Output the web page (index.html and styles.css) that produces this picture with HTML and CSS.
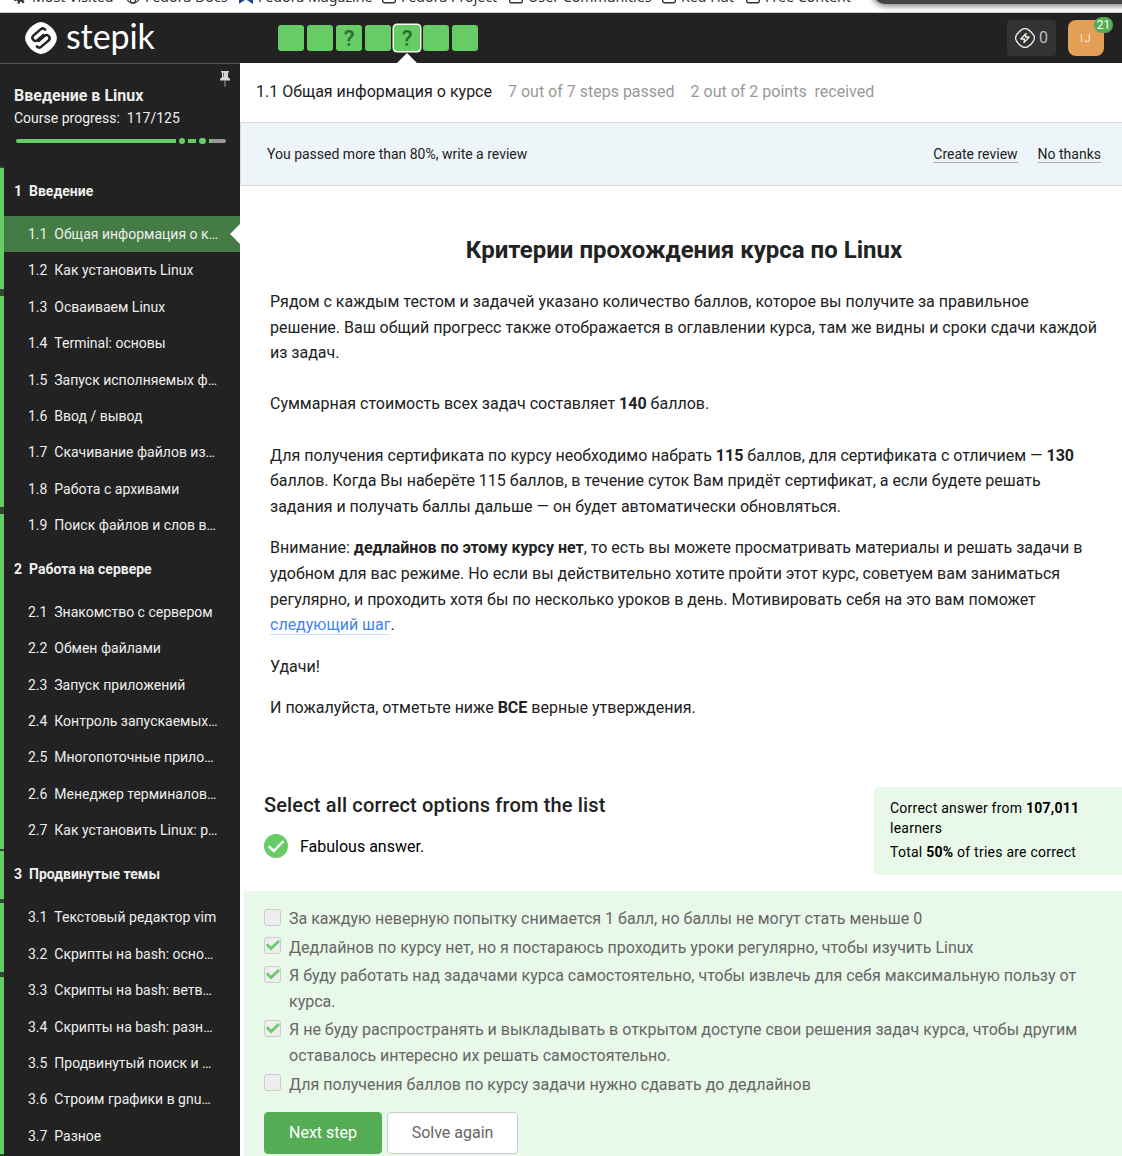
FILE: index.html
```html
<!DOCTYPE html>
<html lang="ru">
<head>
<meta charset="utf-8">
<title>Введение в Linux</title>
<link rel="stylesheet" href="styles.css">
</head>
<body>
<div class="bookmarks">
  <span class="bm"><svg width="14" height="14" viewBox="0 0 14 14"><circle cx="7" cy="7" r="3.4" fill="none" stroke="#333" stroke-width="3.2"/><circle cx="7" cy="7" r="5.6" fill="none" stroke="#333" stroke-width="2.4" stroke-dasharray="2.2 2.2"/></svg><span>Most Visited</span></span>
  <span class="bm"><svg width="14" height="14" viewBox="0 0 14 14" fill="none" stroke="#333" stroke-width="1.2"><circle cx="7" cy="7" r="6.2"/><ellipse cx="7" cy="7" rx="3" ry="6.2"/><path d="M1 7h12"/></svg><span>Fedora Docs</span></span>
  <span class="bm"><svg width="14" height="14" viewBox="0 0 14 14"><path d="M0 0h14v14L7 9.500 0 14z" fill="#3065b4"/><path d="M0 12L4 9M14 13L9 8" stroke="#17345f" stroke-width="1.500"/></svg><span>Fedora Magazine</span></span>
  <span class="bm"><svg width="14" height="14" viewBox="0 0 14 14" fill="none" stroke="#333" stroke-width="1.400"><path d="M.7 2.500h5l1.500 2h6.100v6.800a1.500 1.500 0 0 1-1.500 1.500H2.200a1.500 1.500 0 0 1-1.500-1.500z"/></svg><span>Fedora Project</span></span>
  <span class="bm"><svg width="14" height="14" viewBox="0 0 14 14" fill="none" stroke="#333" stroke-width="1.400"><path d="M.7 2.500h5l1.500 2h6.100v6.800a1.500 1.500 0 0 1-1.500 1.500H2.200a1.500 1.500 0 0 1-1.500-1.500z"/></svg><span>User Communities</span></span>
  <span class="bm"><svg width="14" height="14" viewBox="0 0 14 14" fill="none" stroke="#333" stroke-width="1.400"><path d="M.7 2.500h5l1.500 2h6.100v6.800a1.500 1.500 0 0 1-1.500 1.500H2.200a1.500 1.500 0 0 1-1.500-1.500z"/></svg><span>Red Hat</span></span>
  <span class="bm"><svg width="14" height="14" viewBox="0 0 14 14" fill="none" stroke="#333" stroke-width="1.400"><path d="M.7 2.500h5l1.500 2h6.100v6.800a1.500 1.500 0 0 1-1.500 1.500H2.200a1.500 1.500 0 0 1-1.500-1.500z"/></svg><span>Free Content</span></span>
  <div class="popup-edge"></div>
</div>
<header class="topbar">
  <a class="logo">
    <svg width="34" height="34" viewBox="0 0 34 34"><path d="M11.500 2.700a11 11 0 0 1 11 0 22 22 0 0 1 8.800 8.800 11 11 0 0 1 0 11 22 22 0 0 1-8.800 8.800 11 11 0 0 1-11 0 22 22 0 0 1-8.800-8.800 11 11 0 0 1 0-11 22 22 0 0 1 8.800-8.800z" fill="#fff"/><path d="M21.200 8.600c-1.300-1.300-3.200-1.400-4.600-.2l-7.300 6.200a3.100 3.100 0 0 0 4 4.700l6.200-5.300M12.800 25.400c1.300 1.300 3.200 1.400 4.600.2l7.300-6.200a3.100 3.100 0 0 0-4-4.700l-6.200 5.300" fill="none" stroke="#222" stroke-width="2.500" stroke-linecap="round"/></svg>
    <span class="wordmark">stepik</span>
  </a>
  <nav class="steps">
    <i class="step"></i><i class="step"></i><i class="step">?</i><i class="step"></i><i class="step current">?</i><i class="step"></i><i class="step"></i>
  </nav>
  <div class="energy">
    <svg width="20" height="20" viewBox="0 0 20 20" fill="none" stroke="#eee" stroke-width="1.300" stroke-linejoin="round"><path d="M6.800 1.600a6 6 0 0 1 6.400 0 15 15 0 0 1 5.200 5.200 6 6 0 0 1 0 6.400 15 15 0 0 1-5.200 5.200 6 6 0 0 1-6.400 0 15 15 0 0 1-5.200-5.200 6 6 0 0 1 0-6.400 15 15 0 0 1 5.200-5.200z"/><path d="M11 5.500L5.800 11h3.700L9 14.500 14.200 9h-3.700z"/></svg>
    <span>0</span>
  </div>
  <div class="avatar"><span class="initials">IJ</span><span class="badge">21</span></div>
</header>
<div class="layout">
  <aside class="sidebar">
    <svg class="pin" width="10" height="16" viewBox="0 0 10 16"><path d="M1 0h8v1.500H8V6l2 2v1.500H0V8l2-2V1.500H1z" fill="#d5d5d5"/><path d="M5 9v6.500" stroke="#aaa" stroke-width="1"/><path d="M3.500 1.500v4.500" stroke="#777"/></svg>
    <h2 class="course">Введение в Linux</h2>
    <p class="progress-text">Course progress: &nbsp;117/125</p>
    <div class="progress">
      <b class="bar long"></b><b class="dot"></b><b class="bar mid"></b><b class="dot"></b><b class="bar rest"></b>
    </div>
    <div class="toc">
      <div class="rail"><i style="height:121px"></i><i style="height:211px"></i><i style="height:335px"></i><i style="height:48px"></i><i style="height:69px"></i><i style="height:177px"></i></div>
      <div class="chapters">
        <h3><span>1</span>Введение</h3>
        <a class="active"><span>1.1</span>Общая информация о к…</a>
        <a><span>1.2</span>Как установить Linux</a>
        <a><span>1.3</span>Осваиваем Linux</a>
        <a><span>1.4</span>Terminal: основы</a>
        <a><span>1.5</span>Запуск исполняемых ф…</a>
        <a><span>1.6</span>Ввод / вывод</a>
        <a><span>1.7</span>Скачивание файлов из…</a>
        <a><span>1.8</span>Работа с архивами</a>
        <a><span>1.9</span>Поиск файлов и слов в…</a>
        <h3><span>2</span>Работа на сервере</h3>
        <a><span>2.1</span>Знакомство с сервером</a>
        <a><span>2.2</span>Обмен файлами</a>
        <a><span>2.3</span>Запуск приложений</a>
        <a><span>2.4</span>Контроль запускаемых…</a>
        <a><span>2.5</span>Многопоточные прило…</a>
        <a><span>2.6</span>Менеджер терминалов…</a>
        <a><span>2.7</span>Как установить Linux: р…</a>
        <h3 class="last"><span>3</span>Продвинутые темы</h3>
        <a><span>3.1</span>Текстовый редактор vim</a>
        <a><span>3.2</span>Скрипты на bash: осно…</a>
        <a><span>3.3</span>Скрипты на bash: ветв…</a>
        <a><span>3.4</span>Скрипты на bash: разн…</a>
        <a><span>3.5</span>Продвинутый поиск и …</a>
        <a><span>3.6</span>Строим графики в gnu…</a>
        <a><span>3.7</span>Разное</a>
      </div>
    </div>
  </aside>
  <main class="content">
    <div class="lesson-head"><span class="lesson-title">1.1 Общая информация о курсе</span><span>7 out of 7 steps passed</span><span>2 out of 2 points &nbsp;received</span></div>
    <div class="review"><span>You passed more than 80%, write a review</span><span class="links"><a>Create review</a><a>No thanks</a></span></div>
    <article class="text">
      <h1>Критерии прохождения курса по Linux</h1>
      <p>Рядом с каждым тестом и задачей указано количество баллов, которое вы получите за правильное<br>решение. Ваш общий прогресс также отображается в оглавлении курса, там же видны и сроки сдачи каждой<br>из задач.<br><br>Суммарная стоимость всех задач составляет <b>140</b> баллов.<br><br>Для получения сертификата по курсу необходимо набрать <b>115</b> баллов, для сертификата с отличием — <b>130</b><br>баллов. Когда Вы наберёте 115 баллов, в течение суток Вам придёт сертификат, а если будете решать<br>задания и получать баллы дальше — он будет автоматически обновляться.</p>
      <p>Внимание: <b>дедлайнов по этому курсу нет</b>, то есть вы можете просматривать материалы и решать задачи в<br>удобном для вас режиме. Но если вы действительно хотите пройти этот курс, советуем вам заниматься<br>регулярно, и проходить хотя бы по несколько уроков в день. Мотивировать себя на это вам поможет<br><a>следующий шаг</a>.</p>
      <p>Удачи!</p>
      <p>И пожалуйста, отметьте ниже <b>ВСЕ</b> верные утверждения.</p>
    </article>
    <section class="quiz-head">
      <div>
        <h2>Select all correct options from the list</h2>
        <div class="verdict"><svg width="24" height="24" viewBox="0 0 24 24"><circle cx="12" cy="12" r="12" fill="#6c6"/><path d="M4.600 12.200l5.200 4.800L19.500 7" fill="none" stroke="#fff" stroke-width="2.400"/></svg><span>Fabulous answer.</span></div>
      </div>
      <div class="stats"><p>Correct answer from <b>107,011</b><br>learners</p><p>Total <b>50%</b> of tries are correct</p></div>
    </section>
    <section class="quiz">
      <div class="option"><i class="box"></i><span>За каждую неверную попытку снимается 1 балл, но баллы не могут стать меньше 0</span></div>
      <div class="option"><i class="box"><svg width="15" height="15" viewBox="0 0 15 15"><path d="M1.800 6.200l4.300 4.300L14 3" fill="none" stroke="#6c6" stroke-width="2.700"/></svg></i><span>Дедлайнов по курсу нет, но я постараюсь проходить уроки регулярно, чтобы изучить Linux</span></div>
      <div class="option"><i class="box"><svg width="15" height="15" viewBox="0 0 15 15"><path d="M1.800 6.200l4.300 4.300L14 3" fill="none" stroke="#6c6" stroke-width="2.700"/></svg></i><span>Я буду работать над задачами курса самостоятельно, чтобы извлечь для себя максимальную пользу от<br>курса.</span></div>
      <div class="option"><i class="box"><svg width="15" height="15" viewBox="0 0 15 15"><path d="M1.800 6.200l4.300 4.300L14 3" fill="none" stroke="#6c6" stroke-width="2.700"/></svg></i><span>Я не буду распространять и выкладывать в открытом доступе свои решения задач курса, чтобы другим<br>оставалось интересно их решать самостоятельно.</span></div>
      <div class="option"><i class="box"></i><span>Для получения баллов по курсу задачи нужно сдавать до дедлайнов</span></div>
      <div class="buttons"><button class="primary">Next step</button><button>Solve again</button></div>
    </section>
  </main>
</div>
</body>
</html>
```
FILE: styles.css
```css
* { box-sizing: border-box; }
body {
  margin: 0;
  width: 1122px;
  height: 1156px;
  overflow: hidden;
  background: #fff;
  color: #222;
  font: 16px/25.6px Roboto, "Noto Sans", sans-serif;
  white-space: nowrap;
}
h1, h2, h3, p { margin: 0; }
i { font-style: normal; }

/* bookmarks toolbar */
.bookmarks {
  position: relative;
  height: 13px;
  overflow: hidden;
  display: grid;
  grid-template-columns: 113px 113px 143px 127px 153px 84px 110px;
  padding-left: 13px;
  border-bottom: 1px solid #ccc;
  background: #fff;
}
.bm {
  display: flex;
  gap: 5px;
  margin-top: -13px;
  height: 20px;
  font: 14.2px/20px "Noto Sans", sans-serif;
  color: #333;
}
.bm svg { flex: none; margin-top: 3px; }
.popup-edge {
  position: absolute;
  left: 872px;
  top: -20px;
  width: 280px;
  height: 24px;
  border-radius: 0 0 0 14px;
  background: #444;
  box-shadow: 0 2px 5px 1px rgba(0, 0, 0, .4);
}

/* top bar */
.topbar {
  display: flex;
  height: 50px;
  background: #222;
  color: #fff;
}
.logo { display: flex; width: 278px; padding: 8px 0 0 24px; }
.wordmark {
  margin-left: 8px;
  font: 34px/30px Lato, sans-serif;
  letter-spacing: -.1px;
}
.steps { display: flex; gap: 3px; padding-top: 12px; flex: 1; }
.step {
  width: 26px;
  height: 26px;
  border-radius: 3px;
  background: #6c6;
  color: #2d6a2d;
  font-size: 22px;
  font-weight: 500;
  line-height: 27px;
  text-align: center;
}
.step.current {
  position: relative;
  box-shadow: 0 0 0 1.500px #fff;
}
.step.current::after {
  content: "";
  position: absolute;
  left: 3px;
  top: 28px;
  border: 10px solid transparent;
  border-top: 0;
  border-bottom-color: #fff;
}
.energy {
  display: flex;
  align-items: center;
  gap: 4px;
  width: 49px;
  height: 36px;
  margin: 7px 12px 0 0;
  padding-left: 8px;
  border-radius: 4px;
  background: #333;
  color: #bbb;
}
.avatar {
  position: relative;
  width: 36px;
  height: 36px;
  margin: 7px 18px 0 0;
  border-radius: 8px;
  background: #e29f55;
  font-size: 12px;
  line-height: 36px;
  text-align: center;
}
.initials { font-size: 11.500px; font-weight: 300; letter-spacing: 1.200px; }
.badge {
  position: absolute;
  left: 26px;
  top: -3px;
  width: 19px;
  height: 16px;
  border-radius: 8px;
  background: #54ad54;
  font-size: 12px;
  line-height: 16px;
}

/* sidebar */
.layout { display: flex; height: 1093px; }
.sidebar {
  position: relative;
  width: 240px;
  flex: none;
  background: #222;
  border-top: 1px solid #555;
  color: #eee;
  font-size: 14px;
}
.pin { position: absolute; left: 220px; top: 7px; }
.course { padding: 21px 0 0 14px; font-size: 16px; line-height: 22px; font-weight: 700; }
.progress-text { padding-left: 14px; line-height: 22px; }
.progress {
  display: flex;
  align-items: center;
  height: 8px;
  margin: 8px 14px 0 16px;
}
.progress b { flex: none; }
.bar { height: 4px; background: #6c6; }
.long { width: 159.500px; border-radius: 2px 0 0 2px; margin-right: 3px; }
.dot { width: 6.500px; height: 6.500px; border-radius: 50%; background: #6c6; }
.mid { width: 8px; margin: 0 3px; }
.rest { width: 16.500px; margin-left: 3.500px; border-radius: 0 2px 2px 0; background: linear-gradient(90deg, #6c6 2px, #999 2px); }
.toc { display: flex; margin-top: 21px; }
.rail {
  width: 4px;
  height: 990px;
  padding-top: 2px;
  background: #32472f;
  display: flex;
  flex-direction: column;
}
.rail i { background: #6c6; flex: none; }
.rail i + i { margin-top: 7px; }
.rail i:nth-child(4) { margin-top: 2px; }
.rail i:nth-child(5) { margin-top: 4px; }
.rail i:nth-child(6) { margin-top: 5px; }
.chapters { flex: 1; }
.chapters h3 {
  height: 50.3px;
  padding-left: 10px;
  font-size: 14px;
  font-weight: 700;
  line-height: 50.3px;
}
.chapters h3:first-child { height: 50.1px; }
.chapters h3.last { height: 50.7px; }
.chapters h3 span { display: inline-block; width: 15px; }
.chapters a {
  position: relative;
  display: block;
  height: 36.4px;
  padding-left: 24px;
  line-height: 36.4px;
}
.chapters a span { display: inline-block; width: 26.3px; }
.active { background: #457b45; }
.active::after {
  content: "";
  position: absolute;
  right: 0;
  top: 8px;
  border: 10px solid transparent;
  border-left: 0;
  border-right-color: #fff;
}

/* lesson */
.content { flex: 1; min-width: 0; }
.lesson-head {
  display: flex;
  gap: 16px;
  height: 59px;
  padding-left: 16px;
  line-height: 57px;
  color: #999;
}
.lesson-title { color: #222; }
.review {
  display: flex;
  justify-content: space-between;
  height: 64px;
  padding: 0 21px 0 26px;
  border: 1px solid #d8dadd;
  border-right: 0;
  background: #edf5f9;
  font-size: 14px;
  line-height: 62px;
}
.links { display: flex; align-items: center; gap: 20px; }
.links a { line-height: 16px; border-bottom: 1px solid #aaacae; }
.text { height: 601px; padding: 48px 24px 0 30px; }
.text h1 { font-size: 24px; line-height: 32px; font-weight: 700; text-align: center; margin-bottom: 23px; }
.text p { margin-bottom: 16px; }
.text a { color: #4485ed; box-shadow: 0 1px 0 -0.3px #b4cef8; }
.text b, .stats b { font-weight: 700; }

.quiz-head {
  display: flex;
  justify-content: space-between;
  height: 104px;
  padding-left: 24px;
}
.quiz-head h2 { padding-top: 5px; font-size: 20px; line-height: 26px; font-weight: 500; letter-spacing: .15px; }
.verdict { display: flex; gap: 12px; margin-top: 16px; line-height: 25px; color: #000; }
.stats {
  width: 248px;
  height: 88px;
  padding: 11px 16px;
  border-radius: 4px 0 0 4px;
  background: #e8f8e9;
  color: #000;
  font-size: 14px;
  line-height: 20px;
  letter-spacing: .24px;
}
.stats p + p { margin-top: 4px; }
.quiz {
  margin-left: 4px;
  height: 265px;
  padding: 14.4px 0 0 20px;
  background: #e8f8e9;
  color: #666;
}
.option { display: flex; gap: 8px; margin-bottom: 3px; }
.option span { margin: .6px 0 -.6px; }
.box {
  display: flex;
  width: 17px;
  height: 17px;
  margin-top: 3.3px;
  border: 1px solid #ccc;
  border-radius: 3px;
  background: #eee;
}
.buttons { display: flex; gap: 5px; margin-top: 15.6px; }
button {
  width: 131px;
  height: 42px;
  padding: 0;
  border: 1px solid #ccc;
  border-radius: 4px;
  background: #fff;
  color: #666;
  font: 16px/40px Roboto, sans-serif;
}
.primary { width: 118px; border-color: #54ad54; background: #54ad54; color: #fff; }
```
